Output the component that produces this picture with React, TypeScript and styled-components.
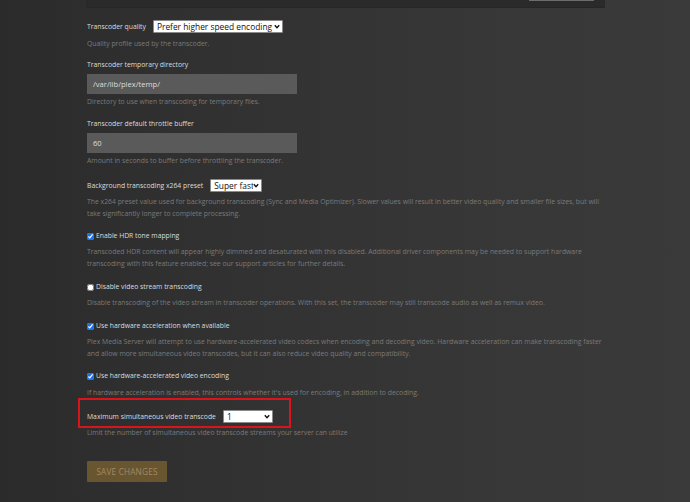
import React from "react";
import styled, { createGlobalStyle } from "styled-components";

const GlobalStyle = createGlobalStyle`
    html, body {
        margin: 0;
        padding: 0;
        width: 690px;
        height: 502px;
        overflow: hidden;
    }
    body {
        background: linear-gradient(90deg, #2b2b2b 0%, #313131 30%, #373737 70%, #3a3a3a 100%);
        font-family: "Open Sans", "Noto Sans", sans-serif;
    }
`;

const Page = styled.div`
    width: 690px;
    height: 502px;
    display: flex;
    flex-direction: column;
`;

const TopPanel = styled.div`
    margin-left: 86px;
    width: 519px;
    height: 8px;
    background: #2a2a2a;
    border-bottom: 1px solid #262626;
    display: flex;
    justify-content: flex-end;
    padding-right: 11px;
    box-sizing: border-box;
    overflow: hidden;
`;

const GhostButton = styled.div`
    width: 65px;
    height: 20px;
    margin-top: -19px;
    box-sizing: border-box;
    border: 1px solid #6c6c6c;
    background: #3a3a3a;
`;

const Content = styled.div`
    margin-left: 87px;
    width: 518px;
    display: flex;
    flex-direction: column;
    padding-top: 12px;
`;

const Setting = styled.div<{ $gap?: number }>`
    display: flex;
    flex-direction: column;
    margin-top: ${(p) => p.$gap ?? 10}px;
`;

const Row = styled.div`
    display: flex;
    align-items: center;
    height: 13px;
`;

const Label = styled.label`
    font-size: 6.8px;
    line-height: 12px;
    color: #dcdcdc;
    display: flex;
    align-items: center;
    white-space: nowrap;
`;

const Desc = styled.p<{ $top?: number }>`
    margin: ${(p) => p.$top ?? 4}px 0 0;
    font-size: 6.85px;
    line-height: 12px;
    color: #7a7a7a;
`;

const SelectWrap = styled.div<{ $width: number }>`
    position: relative;
    margin-left: 7px;
    width: ${(p) => p.$width}px;
    height: 13px;
    flex: none;
`;

const Select = styled.select`
    display: block;
    appearance: none;
    width: 100%;
    height: 13px;
    margin: 0;
    padding: 0 8px 0 3px;
    border: 1px solid #8a8a8a;
    border-radius: 1px;
    background: #ffffff;
    color: #111;
    font-family: "Open Sans", "Noto Sans", sans-serif;
    font-size: 8.4px;
    line-height: 11px;
    box-sizing: border-box;
`;

const Chevron = styled.svg`
    position: absolute;
    right: 3px;
    top: 4px;
    width: 6px;
    height: 5px;
    pointer-events: none;
`;

const TextInput = styled.input`
    display: block;
    margin-top: 3px;
    width: 210px;
    height: 20px;
    box-sizing: border-box;
    border: none;
    background: #5a5a5a;
    color: #dedede;
    padding: 0 6px;
    font-family: "Open Sans", "Noto Sans", sans-serif;
    font-size: 7.6px;
    outline: none;
`;

const Check = styled.input`
    width: 7px;
    height: 7px;
    margin: 0 2px 0 0;
    accent-color: #1a73e8;
`;

const Highlight = styled.div`
    margin: -1px 0 0 -9px;
    width: 213px;
    box-sizing: border-box;
    padding: 10px 0 3px 7px;
    border: 2px solid #d9151b;
`;

const SaveButton = styled.button`
    margin-top: 22px;
    width: 80px;
    height: 21px;
    border: none;
    border-radius: 1px;
    background: #6a5531;
    color: #a08a63;
    font-family: "Open Sans", "Noto Sans", sans-serif;
    font-size: 8.2px;
    letter-spacing: 0.2px;
    text-transform: uppercase;
    padding: 0;
`;

const Dropdown = ({ width, value }: { width: number; value: string }) => (
    <SelectWrap $width={width}>
        <Select defaultValue={value}>
            <option>{value}</option>
        </Select>
        <Chevron viewBox="0 0 6 5">
            <path d="M0.8 1.2 L3 3.6 L5.2 1.2" fill="none" stroke="#111" strokeWidth="1.4" />
        </Chevron>
    </SelectWrap>
);

export default function App() {
    return (
        <Page>
            <GlobalStyle />
            <TopPanel>
                <GhostButton />
            </TopPanel>
            <Content>
                <Setting $gap={0}>
                    <Row>
                        <Label>Transcoder quality</Label>
                        <Dropdown width={130} value="Prefer higher speed encoding" />
                    </Row>
                    <Desc $top={5}>Quality profile used by the transcoder.</Desc>
                </Setting>

                <Setting $gap={9}>
                    <Label>Transcoder temporary directory</Label>
                    <TextInput defaultValue="/var/lib/plex/temp/" />
                    <Desc $top={2}>Directory to use when transcoding for temporary files.</Desc>
                </Setting>

                <Setting $gap={10}>
                    <Label>Transcoder default throttle buffer</Label>
                    <TextInput defaultValue="60" />
                    <Desc $top={2}>Amount in seconds to buffer before throttling the transcoder.</Desc>
                </Setting>

                <Setting $gap={12}>
                    <Row>
                        <Label>Background transcoding x264 preset</Label>
                        <Dropdown width={52} value="Super fast" />
                    </Row>
                    <Desc $top={4}>
                        The x264 preset value used for background transcoding (Sync and Media Optimizer). Slower values will
                        result in better video quality and smaller file sizes, but will take significantly longer to complete
                        processing.
                    </Desc>
                </Setting>

                <Setting $gap={10}>
                    <Label>
                        <Check type="checkbox" defaultChecked />
                        Enable HDR tone mapping
                    </Label>
                    <Desc>
                        Transcoded HDR content will appear highly dimmed and desaturated with this disabled. Additional driver
                        components may be needed to support hardware transcoding with this feature enabled; see our support
                        articles for further details.
                    </Desc>
                </Setting>

                <Setting $gap={11}>
                    <Label>
                        <Check type="checkbox" />
                        Disable video stream transcoding
                    </Label>
                    <Desc>
                        Disable transcoding of the video stream in transcoder operations. With this set, the transcoder may
                        still transcode audio as well as remux video.
                    </Desc>
                </Setting>

                <Setting $gap={11}>
                    <Label>
                        <Check type="checkbox" defaultChecked />
                        Use hardware acceleration when available
                    </Label>
                    <Desc>
                        Plex Media Server will attempt to use hardware-accelerated video codecs when encoding and decoding
                        video. Hardware acceleration can make transcoding faster and allow more simultaneous video transcodes,
                        but it can also reduce video quality and compatibility.
                    </Desc>
                </Setting>

                <Setting $gap={10}>
                    <Label>
                        <Check type="checkbox" defaultChecked />
                        Use hardware-accelerated video encoding
                    </Label>
                    <Desc $top={5}>
                        If hardware acceleration is enabled, this controls whether it's used for encoding, in addition to
                        decoding.
                    </Desc>
                </Setting>

                <Setting $gap={0}>
                    <Highlight>
                        <Row>
                            <Label>Maximum simultaneous video transcode</Label>
                            <Dropdown width={50} value="1" />
                        </Row>
                    </Highlight>
                    <Desc $top={-1}>Limit the number of simultaneous video transcode streams your server can utilize</Desc>
                </Setting>

                <div>
                    <SaveButton>Save Changes</SaveButton>
                </div>
            </Content>
        </Page>
    );
}
